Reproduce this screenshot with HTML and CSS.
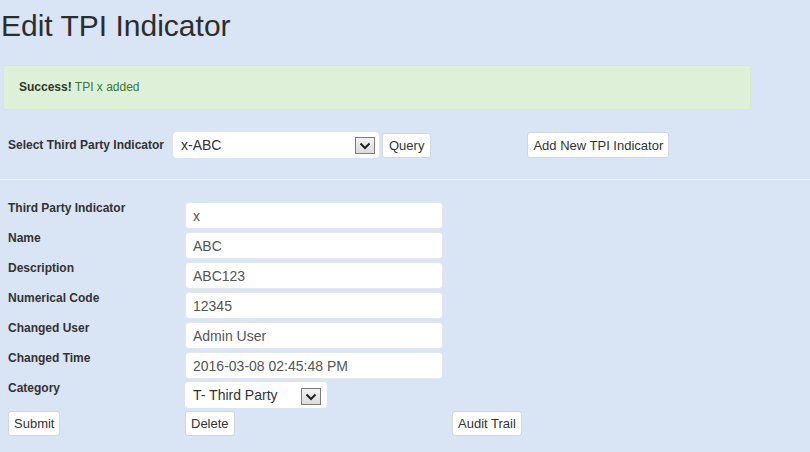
FILE: index.html
```html
<!DOCTYPE html>
<html>
<head>
<meta charset="utf-8">
<title>Edit TPI Indicator</title>
<link rel="stylesheet" href="styles.css">
</head>
<body>
<h1 class="title">Edit TPI Indicator</h1>
<div class="alert"><strong>Success!</strong> TPI x added</div>
<div class="select-row">
  <label class="lbl sel-lbl">Select Third Party Indicator</label>
  <div class="select-wrap wide">
    <select class="sel"><option>x-ABC</option></select>
    <span class="arrow"><svg width="12" height="8" viewBox="0 0 12 8"><path d="M1.5 1.5 L6 6 L10.5 1.5" fill="none" stroke="#222" stroke-width="2"/></svg></span>
  </div>
  <button class="btn query">Query</button>
  <button class="btn add">Add New TPI Indicator</button>
</div>
<hr class="rule">
<div class="form">
  <label class="lbl">Third Party Indicator</label>
  <input class="field" type="text" value="x">
  <span></span>
  <label class="lbl">Name</label>
  <input class="field" type="text" value="ABC">
  <span></span>
  <label class="lbl">Description</label>
  <input class="field" type="text" value="ABC123">
  <span></span>
  <label class="lbl">Numerical Code</label>
  <input class="field" type="text" value="12345">
  <span></span>
  <label class="lbl">Changed User</label>
  <input class="field" type="text" value="Admin User">
  <span></span>
  <label class="lbl">Changed Time</label>
  <input class="field" type="text" value="2016-03-08 02:45:48 PM">
  <span></span>
  <label class="lbl">Category</label>
  <div class="select-wrap narrow">
    <select class="sel"><option>T- Third Party</option></select>
    <span class="arrow"><svg width="12" height="8" viewBox="0 0 12 8"><path d="M1.5 1.5 L6 6 L10.5 1.5" fill="none" stroke="#222" stroke-width="2"/></svg></span>
  </div>
  <span></span>
  <div><button class="btn">Submit</button></div>
  <div><button class="btn">Delete</button></div>
  <div><button class="btn">Audit Trail</button></div>
</div>
</body>
</html>
```

FILE: styles.css
```css
html, body {
  margin: 0;
  padding: 0;
  background: #d9e4f5;
  font-family: "Liberation Sans", Arial, sans-serif;
  color: #333;
}

.title {
  margin: 9px 0 0 1px;
  font-size: 30px;
  line-height: 33px;
  font-weight: normal;
  color: #2d2d2d;
}

.alert {
  margin: 23px 0 0 3px;
  width: 716px;
  padding: 15px;
  border: 1px solid #d6ebc4;
  background: #dff0d8;
  font-size: 12px;
  line-height: 13px;
  color: #3c763d;
}

.alert strong {
  color: #2b3a2b;
}

.select-row {
  margin-top: 22px;
  padding-left: 8px;
  display: flex;
  align-items: center;
  height: 26px;
}

.lbl {
  font-size: 12px;
  line-height: 12px;
  font-weight: bold;
  color: #333;
}

.sel-lbl {
  width: 165px;
  line-height: 14px;
}

.select-wrap {
  position: relative;
  height: 26px;
}

.select-wrap.wide { width: 206px; }
.select-wrap.narrow { width: 142px; }

.sel {
  appearance: none;
  -webkit-appearance: none;
  width: 100%;
  height: 26px;
  border: none;
  border-radius: 4px;
  background: #fff;
  padding: 0 0 0 8px;
  margin: 0;
  font-family: "Liberation Sans", Arial, sans-serif;
  font-size: 14px;
  color: #333;
  outline: none;
}

.arrow {
  position: absolute;
  top: 5px;
  right: 4px;
  width: 18px;
  height: 15px;
  border: 1px solid #7d7d7d;
  background: linear-gradient(#f2f2f2, #dcdcdc);
  display: flex;
  align-items: center;
  justify-content: center;
  pointer-events: none;
}

.narrow .arrow {
  right: 6px;
  top: 6px;
}

.btn {
  height: 25px;
  margin: 0;
  padding: 0 5px;
  border: 1px solid #d2d7de;
  border-radius: 3px;
  background: #fff;
  font-family: "Liberation Sans", Arial, sans-serif;
  font-size: 13px;
  color: #333;
}

.select-row .btn.query {
  margin-left: 3px;
  padding: 0 6px;
}

.select-row .btn.add {
  margin-left: 96px;
  height: 26px;
}

.rule {
  margin: 21px 0 0 0;
  border: none;
  border-top: 1px solid #edf2fa;
  height: 0;
}

.form {
  margin-top: 22px;
  padding-left: 8px;
  display: grid;
  grid-template-columns: 177px 267px auto;
  row-gap: 3px;
  align-items: start;
}

.field {
  box-sizing: border-box;
  width: 258px;
  height: 27px;
  margin: 0;
  padding: 0 7px;
  border: 1px solid #e3e8f0;
  border-radius: 4px;
  background: #fff;
  font-family: "Liberation Sans", Arial, sans-serif;
  font-size: 14px;
  color: #555;
  outline: none;
}
```
